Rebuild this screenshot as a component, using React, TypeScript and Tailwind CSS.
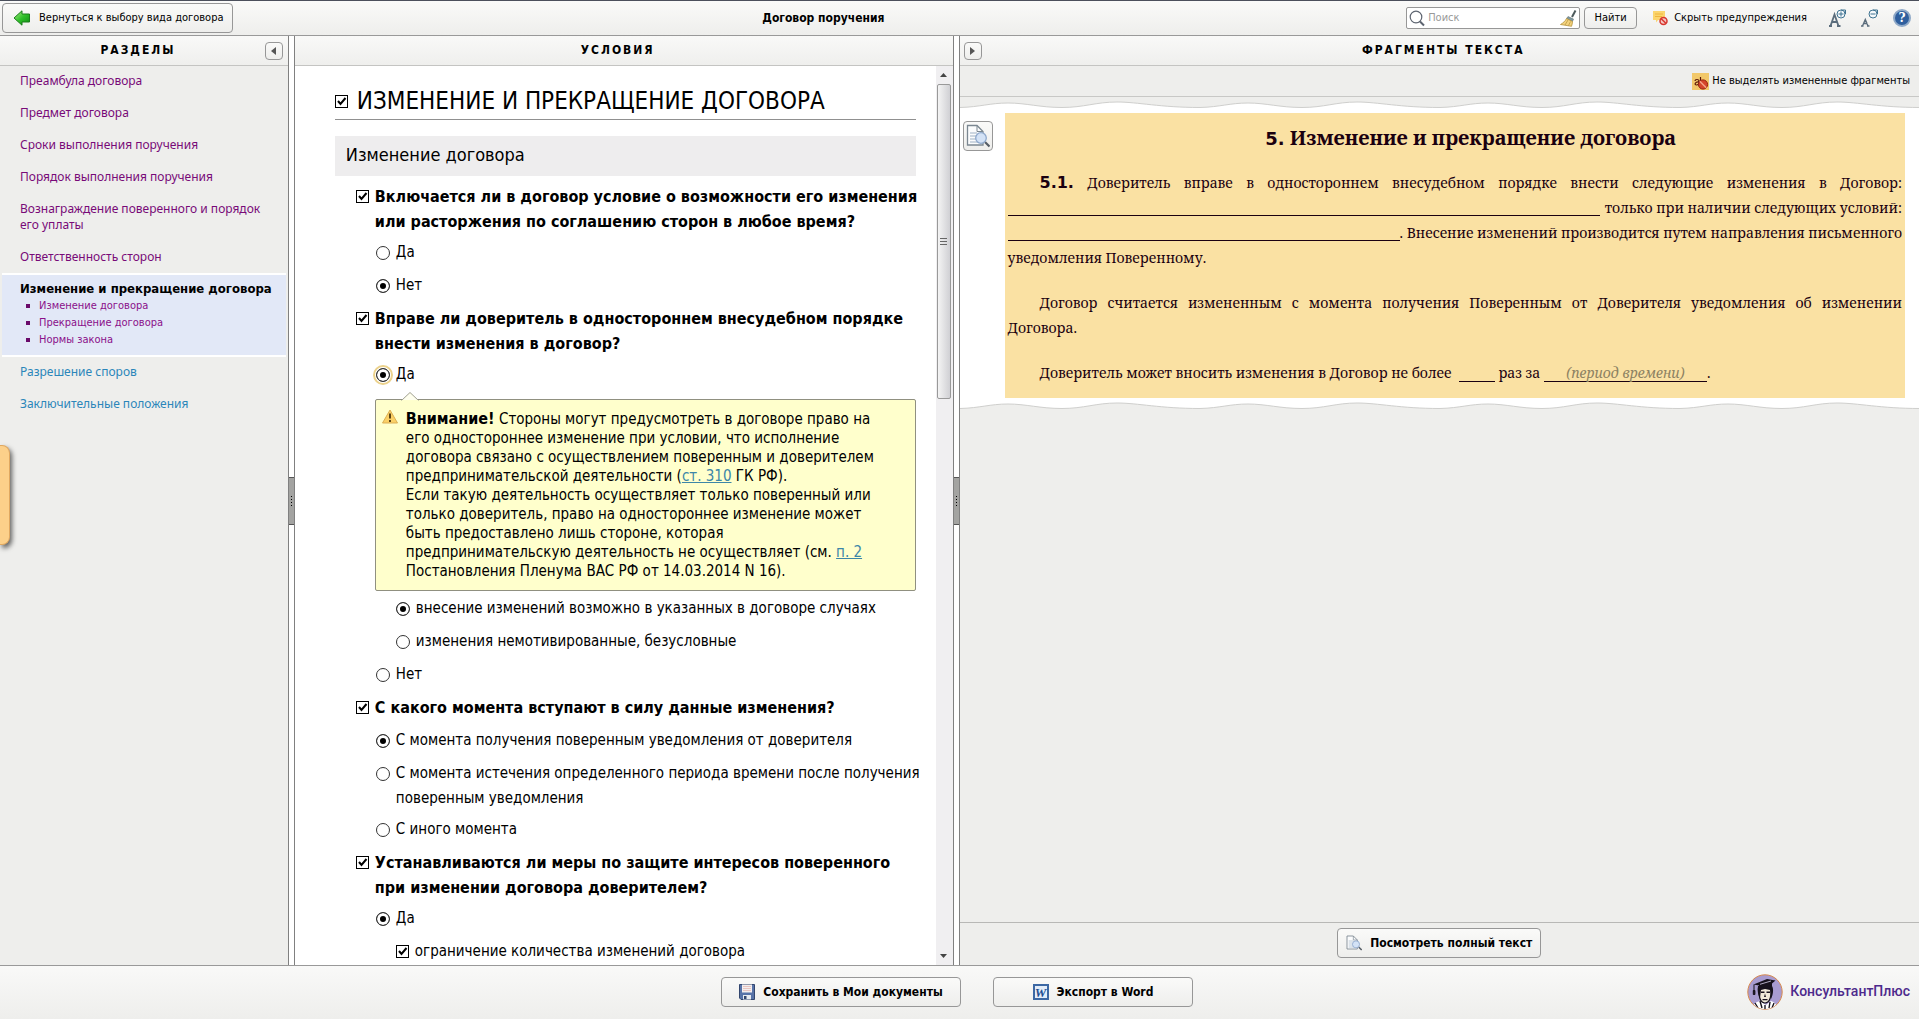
import { useState, type ReactNode } from "react";

const sans = "font-['DejaVu_Sans_Condensed','Noto_Sans',sans-serif]";
const serif = "font-['Noto_Serif','DejaVu_Serif_Condensed','DejaVu_Serif',serif]";

function ArrowLeftIcon() {
  return (
    <svg width="18" height="16" viewBox="0 0 18 16" aria-hidden="true">
      <defs>
        <linearGradient id="green" x1="0" y1="0" x2="1" y2="1">
          <stop offset="0" stopColor="#b6f08c" />
          <stop offset="0.5" stopColor="#2fc02a" />
          <stop offset="1" stopColor="#0d8a12" />
        </linearGradient>
      </defs>
      <path d="M1 8 9 .8v3.200h7.500v8H9v3.200z" fill="url(#green)" stroke="#1b7d1b" strokeLinejoin="round" />
    </svg>
  );
}

function MagnifierIcon() {
  return (
    <svg width="17" height="17" viewBox="0 0 17 17" fill="none" stroke="#5d6470" aria-hidden="true">
      <circle cx="7" cy="7" r="5.800" strokeWidth="1.200" />
      <path d="M11 11.500 15 15.500" strokeWidth="2" />
    </svg>
  );
}

function BroomIcon() {
  return (
    <svg width="17" height="17" viewBox="0 0 17 17" aria-hidden="true">
      <path d="M15.500 .5 12 7" stroke="#4d5a5c" strokeWidth="2" />
      <path d="M8 6.500 13.500 9l-1 2.500L6.500 8.500z" fill="#7f99a0" stroke="#56676b" strokeWidth=".5" />
      <path d="M6.500 8.500 12.500 11.500C12.500 13 12 15 11.500 16.300L.5 14.500C3 13 5.500 11 6.500 8.500z" fill="#f3d27c" stroke="#b5923c" strokeWidth=".8" />
      <path d="M8 10 5 15M10.500 11.500 8.500 15.600" stroke="#b5923c" strokeWidth=".7" />
    </svg>
  );
}

function HideWarningIcon() {
  return (
    <svg width="15" height="16" viewBox="0 0 15 16" aria-hidden="true">
      <path d="M0 1h12v9H5l-2 2.500V10H0z" fill="#fbd56e" />
      <path d="M2 4h8M2 6.500h7" stroke="#eeb53e" />
      <circle cx="10.500" cy="11" r="3.500" fill="#f4c9c4" stroke="#d8362f" strokeWidth="1.500" />
      <path d="m8.200 8.700 4.600 4.600" stroke="#d8362f" strokeWidth="1.500" />
    </svg>
  );
}

function FontSizeIcon({ larger }: { larger: boolean }) {
  return (
    <svg width="17" height="18" viewBox="0 0 17 18" fill="none" aria-hidden="true">
      {larger ? (
        <path d="M1.500 17 5.500 5.500 9.500 17M3 13h5.500M0 17h3M8 17h3.500" stroke="#5b6d7c" strokeWidth="1.800" />
      ) : (
        <path d="M1.500 17 4.300 10.500 7 17M2.500 14.500h4M0 17h2.500M6 17h2.500" stroke="#5b6d7c" strokeWidth="1.400" />
      )}
      <circle cx="12" cy="5" r="4" fill="#f4f8fb" stroke="#3f7391" />
      <path d={larger ? "M9.500 5h5M12 2.500v5" : "M9.500 5h5"} stroke="#3f7391" />
      <path d="M12 1h4.500V5" stroke="#3f7391" />
    </svg>
  );
}

function HelpIcon() {
  return (
    <span className="grid size-[18px] place-items-center rounded-full border-2 border-[#8fa9c8] bg-[#2f5f9e] font-['DejaVu_Serif',serif] text-[12px] leading-none font-bold text-white">
      ?
    </span>
  );
}

function TomatoIcon() {
  return (
    <svg width="17" height="17" viewBox="0 0 17 17" aria-hidden="true">
      <rect width="17" height="17" fill="#f2c86a" />
      <path d="M3 8c0-2 4-2 4 0v3M7 9C3 8.500 2 12 4.500 12c1.500 0 2.500-1 2.500-2M8.500 4v7" stroke="#5b1608" fill="none" strokeWidth="1.200" />
      <circle cx="11" cy="11.500" r="4.600" fill="#d5452a" stroke="#94230f" />
      <path d="m7.800 8.300 6.400 6.400" stroke="#f5a488" strokeWidth="1.500" />
    </svg>
  );
}

function PreviewIcon({ size }: { size: number }) {
  return (
    <svg width={size} height={size} viewBox="0 0 24 24" fill="none" aria-hidden="true">
      <path d="M1.500 1.500h9.500l6 6v13.500H1.500z" fill="#fbfcfd" stroke="#7b8791" strokeWidth="1.300" />
      <path d="M11 1.500v6h6" stroke="#7b8791" />
      <path d="M4 9h7M4 12h6M4 15h6M4 18h8" stroke="#9fb1c4" />
      <path d="m19 18 4.500 4.500" stroke="#555d66" strokeWidth="2.200" />
      <circle cx="15" cy="14" r="5.300" fill="#d3e2f6" stroke="#8ea8cc" strokeWidth="1.300" />
    </svg>
  );
}

function WarningIcon() {
  return (
    <svg width="16" height="15" viewBox="0 0 16 15" aria-hidden="true">
      <path d="M8 1 15.500 14H.5z" fill="#fbd066" stroke="#dbae54" strokeLinejoin="round" />
      <path d="M8 4.500v5M8 11v2" stroke="#4a3510" strokeWidth="1.800" />
    </svg>
  );
}

function FloppyIcon() {
  return (
    <svg width="16" height="16" viewBox="0 0 16 16" aria-hidden="true">
      <path d="M.5.5h15v15H2L.5 14z" fill="#5873a8" stroke="#33466e" />
      <path d="M3 .5h10v8H3z" fill="#f3eeee" />
      <path d="M4 2.500h8M4 4.500h8M4 6.500h8" stroke="#e3b3ad" strokeWidth=".7" />
      <path d="M4 11h8v4.500H4z" fill="#e8ebf0" />
      <path d="M5 12h2.500v3H5z" fill="#33466e" />
    </svg>
  );
}

function WordIcon() {
  return (
    <span className="grid size-4 place-items-center border-2 border-[#3c68a4] bg-[#e3edf9] font-['Liberation_Serif',serif] text-[13px] leading-none font-bold italic text-[#1f4f92]">
      W
    </span>
  );
}

function LogoIcon() {
  return (
    <svg width="36" height="36" viewBox="0 0 36 36" aria-hidden="true">
      <defs>
        <clipPath id="disc">
          <circle cx="18" cy="18" r="17" />
        </clipPath>
      </defs>
      <circle cx="18" cy="18" r="17.200" fill="#a89bd0" stroke="#d98a4c" />
      <g clipPath="url(#disc)">
        <path d="M5 36c1-5 3-8 8-9l6 4 5-4c4 1 6 4 7 9z" fill="#fff" />
        <path d="M8 29l3 5M13 27l2 7M18 31v4M23 28l-1 6M27 29l-2 5M5 32l2 3M30 32l-2 3" stroke="#17121c" strokeWidth="1.400" />
        <path d="M12 13c-1 8 1 16 6 16s7-8 6-16z" fill="#f1ead9" stroke="#17121c" strokeWidth="1.200" />
        <path d="M11 12h14c2 3 1 9-1 13l-1-9-5-1-4 1-1 8c-2-3-3-8-2-12z" fill="#17121c" />
        <path d="M14 17.500h3.500v1.500H14zM19.500 17.500H23v1.500h-3.500zM15.500 25h5v1.300h-5zM18 19.500l-1 3.500h2z" fill="#17121c" />
        <path d="M6.500 10.500 20 5l8.500 1.500-3.500 3v5l-13-1v-2z" fill="#17121c" />
        <path d="M7 10.500v7M6.300 16.500h1.600v4H6.300z" stroke="#17121c" fill="#17121c" />
        <path d="m13 10.300 11-3.300" stroke="#d7d0ea" strokeWidth=".8" />
      </g>
    </svg>
  );
}

function Checkbox({ id }: { id: string }) {
  return (
    <span className="relative block size-[13px] shrink-0">
      <input id={id} type="checkbox" defaultChecked className="peer block size-[13px] appearance-none border border-black bg-white" />
      <svg viewBox="0 0 13 13" className="pointer-events-none absolute inset-0 hidden peer-checked:block" aria-hidden="true">
        <path d="M3 6 5.500 9 10.500 3" fill="none" stroke="#000" strokeWidth="2" />
      </svg>
    </span>
  );
}

const buttonBase =
  "flex items-center justify-center rounded border border-[#979797] bg-linear-to-b from-[#fafaf9] to-[#eeeeec] text-black";

function Question({ id, children, lines = 1 }: { id: string; children: ReactNode; lines?: 1 | 2 }) {
  return (
    <div className={`flex gap-[6px] pl-[21px] ${lines === 2 ? "mb-[6px]" : "mb-2"}`}>
      <div className="flex h-[25px] items-center">
        <Checkbox id={id} />
      </div>
      <label htmlFor={id} className="whitespace-nowrap text-[16px] leading-[25px] font-bold">
        {children}
      </label>
    </div>
  );
}

function Option({
  id,
  name,
  checked = false,
  nested = false,
  focused = false,
  lines = 1,
  children,
}: {
  id: string;
  name: string;
  checked?: boolean;
  nested?: boolean;
  focused?: boolean;
  lines?: 1 | 2;
  children: ReactNode;
}) {
  return (
    <div className={`flex gap-[6px] ${nested ? "pl-[61px]" : "pl-[41px]"} ${lines === 2 ? "mb-[6px]" : "mb-2"}`}>
      <div className="flex h-[25px] items-center">
        <input
          id={id}
          name={name}
          type="radio"
          defaultChecked={checked}
          className={`size-[14px] appearance-none rounded-full border border-[#333] bg-white checked:bg-black checked:shadow-[inset_0_0_0_3px_white] ${
            focused ? "outline-2 outline-offset-1 outline-[#ecd28c]" : ""
          }`}
        />
      </div>
      <label htmlFor={id} className="whitespace-nowrap text-[15px] leading-[25px]">
        {children}
      </label>
    </div>
  );
}

function PanelHeader({ title, shifted = false, children }: { title: string; shifted?: boolean; children?: ReactNode }) {
  return (
    <header
      className={`relative flex h-[30px] shrink-0 items-center justify-center border-b border-[#c4c4c2] bg-linear-to-b from-[#f9f9f8] to-[#efefed] ${
        shifted ? "pr-3" : "pl-2"
      }`}
    >
      <h2 className="pb-[2px] text-[12px] leading-4 font-bold tracking-[2px]">{title}</h2>
      {children}
    </header>
  );
}

function Splitter() {
  return (
    <div role="separator" aria-orientation="vertical" className="flex w-[7px] shrink-0 items-center border-x border-[#808080] bg-white">
      <div className="flex h-12 w-full flex-col items-center justify-center gap-[2px] border-y border-[#555] bg-[#a3a3a1]">
        <span className="size-px bg-black" />
        <span className="size-px bg-black" />
        <span className="size-px bg-black" />
        <span className="size-px bg-black" />
      </div>
    </div>
  );
}

function Wave({ flip }: { flip: boolean }) {
  const id = flip ? "waveBottom" : "waveTop";
  const line = "C20 10 30 6 48 6S80 10.500 102 10.500 136 5 157 5 200 10.500 240 10.500";
  return (
    <svg className="block h-3 w-full shrink-0" aria-hidden="true">
      <defs>
        <pattern id={id} width="240" height="12" patternUnits="userSpaceOnUse">
          <rect width="240" height="12" fill={flip ? "#fff" : "#eeeeec"} />
          <path d={`M0 10.500${line}V12H0z`} fill={flip ? "#eeeeec" : "#fff"} />
          <path d={`M0 10.500${line}`} fill="none" stroke="#cfcfcd" />
        </pattern>
      </defs>
      <rect width="100%" height="12" fill={`url(#${id})`} />
    </svg>
  );
}

const visited = ["Преамбула договора", "Предмет договора", "Сроки выполнения поручения", "Порядок выполнения поручения", "Вознаграждение поверенного и порядок его уплаты", "Ответственность сторон"];
const subsections = ["Изменение договора", "Прекращение договора", "Нормы закона"];
const upcoming = ["Разрешение споров", "Заключительные положения"];

function Sections() {
  return (
    <nav className="flex w-[15%] shrink-0 flex-col bg-[#eeeeec]">
      <PanelHeader title="РАЗДЕЛЫ" shifted>
        <button type="button" aria-label="Свернуть" className={`absolute right-[5px] size-[18px] ${buttonBase}`}>
          <svg width="5" height="8" viewBox="0 0 5 8" aria-hidden="true">
            <path d="M5 0v8L0 4z" fill="#555" />
          </svg>
        </button>
      </PanelHeader>
      <div className="text-[12px] leading-4">
        <ul className="flex flex-col gap-4 py-[7px] pr-4 pl-5 font-['Noto_Sans',sans-serif] text-[#780a78]">
          {visited.map((t) => (
            <li key={t}>
              <a href="#">{t}</a>
            </li>
          ))}
        </ul>
        <div className="mx-[2px] mt-px border-y-2 border-white bg-[#e2e8f7] pt-[6px] pb-[7px] pl-[18px]">
          <a href="#" className="text-[13px] font-bold text-black">
            Изменение и прекращение договора
          </a>
          <ul className="text-[11px] leading-[17px] text-[#8a0f8a]">
            {subsections.map((t) => (
              <li key={t} className="flex items-center gap-[9px] pl-[6px]">
                <span className="size-1 bg-[#6a0a6a]" />
                <a href="#">{t}</a>
              </li>
            ))}
          </ul>
        </div>
        <ul className="flex flex-col gap-4 pt-[7px] pl-5 font-['Noto_Sans',sans-serif] text-[#2b86ba]">
          {upcoming.map((t) => (
            <li key={t}>
              <a href="#">{t}</a>
            </li>
          ))}
        </ul>
      </div>
    </nav>
  );
}

function Conditions() {
  return (
    <main className="flex min-w-0 flex-1 flex-col bg-white">
      <PanelHeader title="УСЛОВИЯ" shifted />
      <div className="flex min-h-0 flex-1">
        <form className="min-w-0 flex-1 overflow-hidden pl-10">
          <div className="mr-5 flex items-center gap-[9px] border-b border-[#909090] pt-[21px] pb-[3px]">
            <Checkbox id="section" />
            <label htmlFor="section" className="whitespace-nowrap text-[24px] leading-[29px]">
              ИЗМЕНЕНИЕ И ПРЕКРАЩЕНИЕ ДОГОВОРА
            </label>
          </div>
          <h3 className="mt-4 mr-5 mb-2 bg-[#eeedee] px-[11px] pb-[2px] text-[18px] leading-[38px]">Изменение договора</h3>

          <Question id="q1" lines={2}>
            Включается ли в договор условие о возможности его изменения
            <br />
            или расторжения по соглашению сторон в любое время?
          </Question>
          <Option id="q1a" name="q1">Да</Option>
          <Option id="q1b" name="q1" checked>Нет</Option>

          <Question id="q2" lines={2}>
            Вправе ли доверитель в одностороннем внесудебном порядке
            <br />
            внести изменения в договор?
          </Question>
          <Option id="q2a" name="q2" checked focused>Да</Option>
          <div className="relative mt-3 mr-5 mb-[5px] ml-10 flex gap-2 rounded-xs border border-[#909080] bg-[#ffffcc] pt-[9px] pb-[9px] pl-[6px]">
            <svg className="absolute -top-2 left-[25px]" width="18" height="9" viewBox="0 0 18 9" aria-hidden="true">
              <path d="M.5 8.500 9 .5l8.500 8" fill="#ffffee" stroke="#a0a090" />
              <path d="M1 8.600h16" stroke="#ffffcc" />
            </svg>
            <div className="shrink-0">
              <WarningIcon />
            </div>
            <p className="whitespace-nowrap text-[15px] leading-[19px]">
              <strong className="text-[16px]">Внимание!</strong> Стороны могут предусмотреть в договоре право на
              <br />
              его одностороннее изменение при условии, что исполнение
              <br />
              договора связано с осуществлением поверенным и доверителем
              <br />
              предпринимательской деятельности (<a href="#" className="text-[#3c86a8] underline">ст. 310</a> ГК РФ).
              <br />
              Если такую деятельность осуществляет только поверенный или
              <br />
              только доверитель, право на одностороннее изменение может
              <br />
              быть предоставлено лишь стороне, которая
              <br />
              предпринимательскую деятельность не осуществляет (см. <a href="#" className="text-[#3c86a8] underline">п. 2</a>
              <br />
              Постановления Пленума ВАС РФ от 14.03.2014 N 16).
            </p>
          </div>
          <Option id="q2c" name="q2case" checked nested>внесение изменений возможно в указанных в договоре случаях</Option>
          <Option id="q2d" name="q2case" nested>изменения немотивированные, безусловные</Option>
          <Option id="q2b" name="q2">Нет</Option>

          <Question id="q3">С какого момента вступают в силу данные изменения?</Question>
          <Option id="q3a" name="q3" checked>С момента получения поверенным уведомления от доверителя</Option>
          <Option id="q3b" name="q3" lines={2}>
            С момента истечения определенного периода времени после получения
            <br />
            поверенным уведомления
          </Option>
          <Option id="q3c" name="q3">С иного момента</Option>

          <Question id="q4" lines={2}>
            Устанавливаются ли меры по защите интересов поверенного
            <br />
            при изменении договора доверителем?
          </Question>
          <Option id="q4a" name="q4" checked>Да</Option>
          <div className="flex items-center gap-[6px] pl-[61px]">
            <Checkbox id="limit" />
            <label htmlFor="limit" className="whitespace-nowrap text-[15px] leading-[25px]">
              ограничение количества изменений договора
            </label>
          </div>
        </form>
        <div className="flex w-[17px] shrink-0 flex-col items-center bg-[#f0eff1] pr-px">
          <svg className="my-[7px] shrink-0" width="7" height="4" viewBox="0 0 7 4" aria-hidden="true">
            <path d="M0 4h7L3.500 0z" fill="#444" />
          </svg>
          <div className="flex h-[35%] w-[14px] flex-col items-center justify-center gap-[2px] rounded-xs border border-[#999] bg-linear-to-r from-[#f4f4f4] to-[#d0d0d4]">
            <span className="h-px w-[7px] bg-[#666]" />
            <span className="h-px w-[7px] bg-[#666]" />
            <span className="h-px w-[7px] bg-[#666]" />
          </div>
          <svg className="mt-auto mb-[7px] shrink-0" width="7" height="4" viewBox="0 0 7 4" aria-hidden="true">
            <path d="M0 0h7L3.500 4z" fill="#444" />
          </svg>
        </div>
      </div>
    </main>
  );
}

function Fragments() {
  return (
    <section className="flex w-1/2 shrink-0 flex-col bg-[#eeeeec]">
      <PanelHeader title="ФРАГМЕНТЫ ТЕКСТА">
        <button type="button" aria-label="Развернуть" className={`absolute left-1 size-[18px] ${buttonBase}`}>
          <svg width="5" height="8" viewBox="0 0 5 8" aria-hidden="true">
            <path d="M0 0v8l5-4z" fill="#555" />
          </svg>
        </button>
      </PanelHeader>
      <div className="flex h-[31px] shrink-0 items-center justify-end border-b border-[#c8c8c6] pr-[9px]">
        <button type="button" className="flex items-center gap-[3px] text-[11px] leading-4">
          <TomatoIcon />
          Не выделять измененные фрагменты
        </button>
      </div>
      <Wave flip={false} />
      <div className="flex items-start bg-white pt-1 pr-[14px] pl-[3px]">
        <button type="button" aria-label="Просмотр" className={`mt-2 mr-3 size-[30px] shrink-0 ${buttonBase}`}>
          <PreviewIcon size={24} />
        </button>
        <article className={`min-w-0 flex-1 bg-[#fae1a3] px-[3px] pt-3 pb-[13px] text-[14px] leading-[25px] text-[#1a0010] ${serif}`}>
          <h3 className="mb-[19px] pl-8 text-center text-[20px] leading-[25px] font-bold">
            <span className="font-['DejaVu_Sans',sans-serif] text-[18px]">5.</span> Изменение и прекращение договора
          </h3>
          <p className="mb-5">
            <span className="block whitespace-nowrap pl-8 [text-align-last:justify]">
              <b className="font-['DejaVu_Sans',sans-serif] text-[16px] leading-none">5.1.</b> Доверитель вправе в одностороннем внесудебном порядке внести
              следующие изменения в Договор:
            </span>
            <span className="flex items-end gap-[5px] whitespace-nowrap">
              <span className="mb-1 flex-1 border-b border-current" />
              только при наличии следующих условий:
            </span>
            <span className="flex items-end whitespace-nowrap">
              <span className="mb-1 flex-1 border-b border-current" />. Внесение изменений производится путем направления письменного
            </span>
            уведомления Поверенному.
          </p>
          <p className="mb-5">
            <span className="block whitespace-nowrap pl-8 [text-align-last:justify]">
              Договор считается измененным с момента получения Поверенным от Доверителя уведомления об изменении
            </span>
            Договора.
          </p>
          <p className="whitespace-pre pl-8">
            {"Доверитель может вносить изменения в Договор не более  "}
            <span className="inline-block w-9 border-b border-current align-[-4px]" />
            {" раз за "}
            <span className="inline-block w-[163px] border-b border-current text-center leading-[17px] italic">
              <span className="text-[#8d8262]">(период времени)</span>
            </span>
            .
          </p>
        </article>
      </div>
      <Wave flip />
      <div className="mt-auto flex h-[43px] shrink-0 items-center justify-center border-t border-[#b8b8b6] pb-[2px]">
        <button type="button" className={`h-[30px] gap-2 px-2 text-[12px] font-bold ${buttonBase}`}>
          <PreviewIcon size={16} />
          Посмотреть полный текст
        </button>
      </div>
    </section>
  );
}

export default function App() {
  const [query, setQuery] = useState("");
  return (
    <div className={`relative flex h-screen flex-col overflow-hidden bg-[#eeeeec] text-black ${sans}`}>
      <header className="flex h-9 shrink-0 items-center border-t border-b border-t-[#4c505c] border-b-[#999] bg-linear-to-b from-[#fafaf9] to-[#eeeeec] pr-2 pl-[2px] text-[11px]">
        <button type="button" className={`h-[30px] gap-2 pr-2 pl-[10px] ${buttonBase}`}>
          <ArrowLeftIcon />
          Вернуться к выбору вида договора
        </button>
        <h1 className="flex-1 pl-2 text-center text-[12px] font-bold">Договор поручения</h1>
        <label className="flex h-[22px] w-[174px] items-center gap-[2px] rounded-xs border border-[#979797] bg-white px-[2px]">
          <MagnifierIcon />
          <input
            type="text"
            aria-label="Поиск"
            placeholder="Поиск"
            value={query}
            onChange={(e) => setQuery(e.target.value)}
            className="min-w-0 flex-1 text-[11px] outline-none placeholder:text-[#999]"
          />
          <button type="button" aria-label="Очистить" onClick={() => setQuery("")}>
            <BroomIcon />
          </button>
        </label>
        <button type="button" className={`ml-1 h-[22px] w-[53px] ${buttonBase}`}>
          Найти
        </button>
        <button type="button" className="ml-4 flex items-center gap-[6px]">
          <HideWarningIcon />
          Скрыть предупреждения
        </button>
        <button type="button" aria-label="Увеличить шрифт" className="ml-[22px]">
          <FontSizeIcon larger />
        </button>
        <button type="button" aria-label="Уменьшить шрифт" className="ml-[15px]">
          <FontSizeIcon larger={false} />
        </button>
        <button type="button" aria-label="Справка" className="ml-[15px]">
          <HelpIcon />
        </button>
      </header>

      <div className="flex min-h-0 flex-1">
        <Sections />
        <Splitter />
        <Conditions />
        <Splitter />
        <Fragments />
      </div>

      <footer className="grid h-[54px] shrink-0 grid-cols-[1fr_auto_1fr] items-center border-t border-[#999] bg-linear-to-b from-[#f9f9f8] to-[#eeeeec] pr-[9px] pb-[2px] pl-1 text-[12px] font-bold">
        <div className="col-start-2 flex gap-8">
          <button type="button" className={`h-[30px] w-60 gap-2 ${buttonBase}`}>
            <FloppyIcon />
            Сохранить в Мои документы
          </button>
          <button type="button" className={`h-[30px] w-[200px] gap-2 ${buttonBase}`}>
            <WordIcon />
            Экспорт в Word
          </button>
        </div>
        <a href="#" className="flex items-center gap-[7px] justify-self-end">
          <LogoIcon />
          <span className="font-['Roboto','Liberation_Sans',sans-serif] text-[14px] font-medium text-[#4d2a8c]">КонсультантПлюс</span>
        </a>
      </footer>

      <button
        type="button"
        aria-label="Открыть панель"
        className="absolute top-[445px] left-0 h-[100px] w-[10px] rounded-r-lg border border-l-0 border-[#e0a860] bg-[#fcd08a] shadow-[2px_3px_5px_rgba(0,0,0,0.6)]"
      />
    </div>
  );
}
